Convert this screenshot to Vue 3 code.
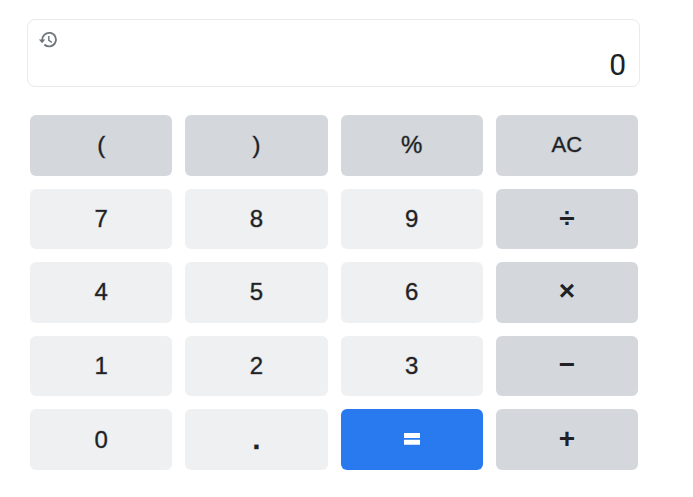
<script setup>
import { ref } from 'vue'

const display = ref('0')

const keys = [
  { label: '(', kind: 'function' },
  { label: ')', kind: 'function' },
  { label: '%', kind: 'function' },
  { label: 'AC', kind: 'function clear' },
  { label: '7' },
  { label: '8' },
  { label: '9' },
  { label: '÷', kind: 'function operator' },
  { label: '4' },
  { label: '5' },
  { label: '6' },
  { label: '×', kind: 'function operator' },
  { label: '1' },
  { label: '2' },
  { label: '3' },
  { label: '−', kind: 'function operator' },
  { label: '0' },
  { label: '.', kind: 'point' },
  { label: '=', kind: 'equals' },
  { label: '+', kind: 'function operator' },
]

function evaluate(source) {
  const tokens = source.match(/\d+\.?\d*|\.\d+|[()%÷×−+]/g) || []
  let i = 0
  const atom = () => {
    let value
    if (tokens[i] === '−') {
      i++
      return -atom()
    }
    if (tokens[i] === '(') {
      i++
      value = sum()
      i++
    } else {
      value = Number(tokens[i++])
    }
    while (tokens[i] === '%') {
      i++
      value /= 100
    }
    return value
  }
  const product = () => {
    let value = atom()
    while (tokens[i] === '×' || tokens[i] === '÷') {
      value = tokens[i++] === '×' ? value * atom() : value / atom()
    }
    return value
  }
  const sum = () => {
    let value = product()
    while (tokens[i] === '+' || tokens[i] === '−') {
      value = tokens[i++] === '+' ? value + product() : value - product()
    }
    return value
  }
  const result = sum()
  return Number.isFinite(result) ? String(result).replace('-', '−') : 'Error'
}

function press(label) {
  if (label === 'AC') display.value = '0'
  else if (label === '=') display.value = evaluate(display.value)
  else if (display.value === 'Error' || (display.value === '0' && /[\d(]/.test(label))) display.value = label
  else display.value += label
}
</script>

<template>
  <main class="calculator">
    <section class="screen">
      <button class="history" type="button" aria-label="History">
        <svg viewBox="0 0 20 18" aria-hidden="true">
          <path class="ring" d="M4.4 9.4A6.8 6.8 0 1 1 6.4 13.5" />
          <path class="arrow" d="M0.9 8.5h6.4L4.1 12.3z" />
          <path class="hands" d="M10.8 5v4.4l3.1 1.9" />
        </svg>
      </button>
      <output class="result">{{ display }}</output>
    </section>
    <section class="keypad">
      <button
        v-for="key in keys"
        :key="key.label"
        type="button"
        class="key"
        :class="key.kind"
        :aria-label="key.label === '=' ? 'equals' : undefined"
        @click="press(key.label)"
      >
        <svg v-if="key.label === '='" viewBox="0 0 16 12" aria-hidden="true">
          <path d="M0 0h16v5H0zM0 6.8h16v5H0z" />
        </svg>
        <template v-else>{{ key.label }}</template>
      </button>
    </section>
  </main>
</template>

<style>
body {
  margin: 0;
  background: #fff;
}
</style>

<style scoped>
.calculator {
  box-sizing: border-box;
  display: flex;
  flex-direction: column;
  gap: 28px;
  min-height: 100vh;
  padding: 19px 53px 27px 27px;
  font-family: "Liberation Sans", Arial, sans-serif;
  color: #202124;
}

.screen {
  box-sizing: border-box;
  display: flex;
  align-items: flex-start;
  justify-content: space-between;
  padding: 11px 13px 4px 10px;
  border: 1px solid #e8eaed;
  border-radius: 8px;
}

.history {
  display: flex;
  padding: 0;
  border: 0;
  background: none;
  cursor: pointer;
}

.history svg {
  width: 20px;
  height: 18px;
  fill: none;
  stroke: #70757a;
  stroke-width: 1.8;
}

.history .arrow {
  fill: #70757a;
  stroke: none;
}

.history .hands {
  stroke-width: 1.4;
}

.result {
  padding-top: 17px;
  font-family: Roboto, "Liberation Sans", sans-serif;
  font-size: 30px;
  line-height: 34px;
}

.keypad {
  flex: 1;
  display: grid;
  grid-template-columns: repeat(4, 1fr);
  grid-auto-rows: 1fr;
  gap: 13px;
  padding: 0 2px 0 3px;
}

.key {
  display: flex;
  align-items: center;
  justify-content: center;
  min-height: 44px;
  padding: 0;
  border: 0;
  border-radius: 6px;
  background: #eff0f2;
  color: inherit;
  font-family: inherit;
  font-size: 24px;
  line-height: 28px;
  -webkit-text-stroke: 1px rgb(32 33 36 / 35%);
  cursor: pointer;
}

.function {
  background: #d4d7dc;
}

.clear {
  font-size: 22px;
}

.operator,
.point {
  font-size: 28px;
  font-weight: 700;
}

.operator {
  -webkit-text-stroke: 0;
}

.operator,
.equals {
  padding-bottom: 2px;
}

.equals {
  background: #2979ef;
}

.equals svg {
  width: 16px;
  height: 12px;
  fill: #fff;
}
</style>
